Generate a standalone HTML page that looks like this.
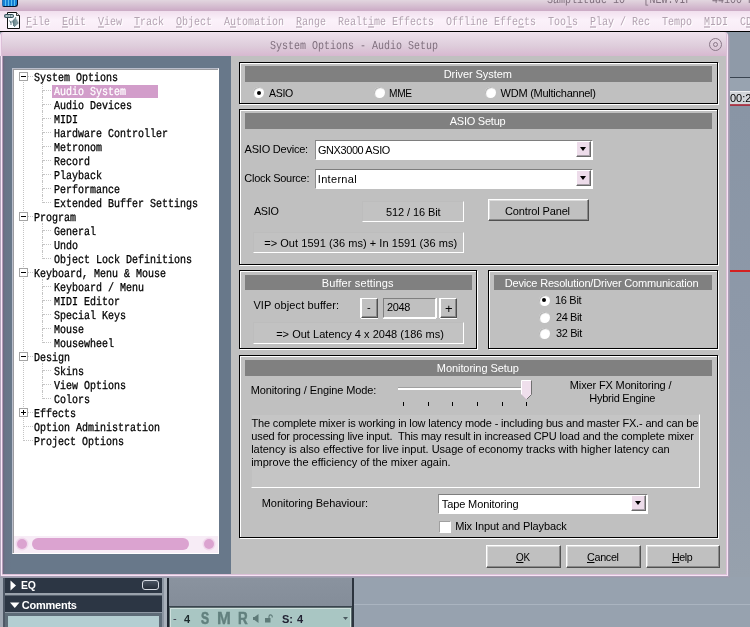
<!DOCTYPE html>
<html><head><meta charset="utf-8"><title>System Options - Audio Setup</title>
<style>
html,body{margin:0;padding:0;}
body{width:750px;height:627px;position:relative;overflow:hidden;background:#929daa;font-family:"Liberation Sans",sans-serif;font-size:11px;color:#000;}
div,span{position:absolute;box-sizing:border-box;white-space:pre;}
.t{font-family:"Liberation Sans",sans-serif;font-size:11px;line-height:13px;color:#000;}
.m{font-family:"Liberation Mono",monospace;font-size:10px;line-height:14px;color:#000;transform:scaleY(1.2);text-rendering:geometricPrecision;transform-origin:0 50%;-webkit-text-stroke:0.25px;}
.menu{color:#b3a3b1;text-shadow:1px 1px 0 #fff;-webkit-text-stroke:0;}
.menu u{text-underline-offset:1px;}
.hd{background:#808080;}
.grp{border:1px solid #000;box-shadow:inset 1px 1px 0 #fff,1px 1px 0 #fff;}
.btn{background:#c0c0c0;border:1px solid;border-color:#fff #505050 #505050 #fff;box-shadow:inset -1px -1px 0 #8a8a8a,inset 1px 1px 0 #dcdcdc;}
.flat{border:1px solid;border-color:#bdbdbd #fff #fff #bdbdbd;background:#c2c2c2;}
.combo{background:#fff;border:1px solid;border-color:#7e7e7e #fff #fff #8c8c8c;}
.cbtn{background:#eddcea;border:1px solid;border-color:#fff #6a6a6a #6a6a6a #fff;box-shadow:inset -1px -1px 0 #a8a0a8;}
.arrow{width:0;height:0;border-left:3.5px solid transparent;border-right:3.5px solid transparent;border-top:4px solid #000;}
.radio{width:11px;height:11px;border-radius:50%;background:#fff;box-shadow:inset 1px 1px 1px #b0b0b0;}
.dot{width:4px;height:4px;border-radius:50%;background:#000;left:3.5px;top:3.5px;}
u{text-decoration:underline;}
</style></head><body><div id="root" style="left:0;top:0;width:750px;height:627px;will-change:transform;">

<div style="left:0px;top:0px;width:750px;height:11px;background:linear-gradient(#e2d6df,#cbaac5);"></div>
<div style="left:2px;top:0px;width:16px;height:7px;background:repeating-linear-gradient(90deg,#1580d4 0,#1580d4 2px,#5cc0f0 2px,#5cc0f0 3px);border:1px solid;border-color:#1580d4 #0a1428 #0a1428 #2a70b0;border-top:none;border-radius:0 0 3px 2px;"></div>
<span class="m" style="left:547px;top:-5px;color:#7e6e7c;-webkit-text-stroke:0;">Samplitude 10</span>
<span class="m" style="left:643.5px;top:-5px;color:#7e6e7c;-webkit-text-stroke:0;">[NEW.VIP</span>
<span class="m" style="left:712px;top:-5px;color:#7e6e7c;-webkit-text-stroke:0;">44100 H</span>
<div style="left:0px;top:11px;width:750px;height:20px;background:linear-gradient(#f1dfee,#fbf1fa 45%,#f8ecf6);"></div>
<svg style="position:absolute;left:0px;top:11px" width="24" height="20" viewBox="0 11 24 20"><path d="M7.5 12.5h9l3 3v13h-12z" fill="#fbfcff" stroke="#111" stroke-width="1"/><path d="M16.5 12.5v3h3" fill="#dfe3e8" stroke="#111" stroke-width="0.8"/><rect x="4.5" y="14.5" width="9" height="3" rx="1" fill="#7b959b" stroke="#33505a" stroke-width="1"/><path d="M6 16h1.5M8.5 16h1.5M11 16h1.5" stroke="#f4f8fa" stroke-width="1"/><path d="M9.5 20.5l1.5 2.5M11 21v4M12.3 20.5l1 3M13.5 19.5v6.5M14.6 18.5v8.5M15.7 17v9M16.8 19.5v5.5M17.8 21.5v2.5" stroke="#3f636b" stroke-width="0.8" fill="none"/></svg>
<span class="m menu" style="left:26px;top:17px;"><u>F</u>ile</span>
<span class="m menu" style="left:62px;top:17px;"><u>E</u>dit</span>
<span class="m menu" style="left:98px;top:17px;"><u>V</u>iew</span>
<span class="m menu" style="left:134px;top:17px;"><u>T</u>rack</span>
<span class="m menu" style="left:176px;top:17px;"><u>O</u>bject</span>
<span class="m menu" style="left:224px;top:17px;">A<u>u</u>tomation</span>
<span class="m menu" style="left:296px;top:17px;"><u>R</u>ange</span>
<span class="m menu" style="left:338px;top:17px;">Realt<u>i</u>me Effects</span>
<span class="m menu" style="left:446px;top:17px;">Offline Effe<u>c</u>ts</span>
<span class="m menu" style="left:548px;top:17px;">Too<u>l</u>s</span>
<span class="m menu" style="left:590px;top:17px;"><u>P</u>lay / Rec</span>
<span class="m menu" style="left:662px;top:17px;">Tempo</span>
<span class="m menu" style="left:704px;top:17px;"><u>M</u>IDI</span>
<span class="m menu" style="left:740px;top:17px;">C<u>D</u></span>
<div style="left:0px;top:31px;width:750px;height:1px;background:#000;"></div>
<div style="left:728px;top:32px;width:22px;height:45px;background:#8f9aa8;"></div>
<div style="left:728px;top:77px;width:22px;height:1px;background:#3a4450;"></div>
<div style="left:728px;top:78px;width:22px;height:13px;background:#98a3b0;"></div>
<div style="left:728px;top:91px;width:22px;height:13px;background:#d2d6da;border-top:1px solid #eef0f2;"></div>
<span class="t" style="left:730px;top:92px;font-size:11px;">00:2</span>
<div style="left:728px;top:104px;width:22px;height:2px;background:linear-gradient(#b85060,#9c2c3c);"></div>
<div style="left:728px;top:106px;width:22px;height:471px;background:linear-gradient(#8995a5,#8e99a9 50%,#97a1ad);"></div>
<div style="left:728px;top:270px;width:22px;height:2px;background:#d42020;"></div>
<div style="left:0px;top:577px;width:750px;height:50px;background:#8a929e;"></div>
<div style="left:0px;top:577px;width:3px;height:50px;background:#a0a8b4;"></div>
<div style="left:3px;top:577px;width:2px;height:50px;background:#4e5866;"></div>
<div style="left:5px;top:577px;width:157px;height:50px;background:#5e6c78;"></div>
<div style="left:5px;top:577px;width:157px;height:16px;background:#2c3644;"></div>
<div style="left:5px;top:593px;width:157px;height:2px;background:#9aa2ac;"></div>
<div style="left:5px;top:595px;width:157px;height:1px;background:#5a6470;"></div>
<div style="left:5px;top:596px;width:157px;height:16px;background:#2c3644;"></div>
<div style="left:5px;top:612px;width:157px;height:1px;background:#8e98a4;"></div>
<div style="left:8px;top:616px;width:151px;height:11px;background:#b4ced2;"></div>
<div style="left:162px;top:577px;width:2px;height:50px;background:#8c96a2;"></div>
<div style="left:164px;top:577px;width:3px;height:50px;background:#a8b0ba;"></div>
<div style="left:167px;top:577px;width:2px;height:50px;background:#1e2630;"></div>
<svg style="position:absolute;left:10px;top:580px" width="7" height="11"><path d="M0.5 0.5L6 5.5L0.5 10.5z" fill="#fff"/></svg>
<span class="t" style="left:21.29px;top:579px;letter-spacing:-0.174px;transform:scaleX(0.9463);transform-origin:0 0;color:#fff;font-weight:bold;">EQ</span>
<svg style="position:absolute;left:10px;top:602px" width="10" height="7"><path d="M0 0.5L9.5 0.5L4.75 6z" fill="#fff"/></svg>
<span class="t" style="left:21.83px;top:599px;letter-spacing:-0.245px;color:#fff;font-weight:bold;">Comments</span>
<div style="left:142px;top:580px;width:17px;height:10px;border:1px solid #d8dce4;border-radius:3px;background:linear-gradient(#4a5462,#252d39);"></div>
<div style="left:169px;top:577px;width:185px;height:29px;background:linear-gradient(#8a939f,#848d99);"></div>
<div style="left:169px;top:606px;width:185px;height:2px;background:#3a444e;"></div>
<div style="left:169px;top:607px;width:183px;height:20px;background:#a9c6c3;border:1px solid #5c6c6e;border-bottom:none;box-shadow:inset 1px 1px 0 #cfe0dd,inset -1px 0 0 #cfe0dd;"></div>
<div style="left:352px;top:577px;width:2px;height:50px;background:#2c343e;"></div>
<div style="left:354px;top:577px;width:396px;height:50px;background:#97a2af;"></div>
<div style="left:354px;top:604px;width:396px;height:1px;background:#aab4c0;"></div>
<span class="t" style="left:173px;top:612px;color:#334;">-</span>
<span class="t" style="left:184px;top:613px;font-weight:bold;font-size:11px;line-height:13px;color:#1c2a2c;">4</span>
<span class="t" style="left:201px;top:609.5px;font-weight:bold;font-size:16px;line-height:18px;color:#62807e;-webkit-text-stroke:0.6px #62807e;transform:scaleX(0.76);transform-origin:0 0;">S</span>
<span class="t" style="left:216.7px;top:609.5px;font-weight:bold;font-size:16px;line-height:18px;color:#62807e;-webkit-text-stroke:0.3px #62807e;transform:scaleX(1.04);transform-origin:0 0;">M</span>
<span class="t" style="left:237.5px;top:609.5px;font-weight:bold;font-size:16px;line-height:18px;color:#62807e;-webkit-text-stroke:0.5px #62807e;transform:scaleX(0.84);transform-origin:0 0;">R</span>
<svg style="position:absolute;left:253px;top:614px" width="6" height="9"><path d="M0 3h1.5l4-3v9l-4-3h-1.5z" fill="#5e7a78"/></svg>
<svg style="position:absolute;left:265px;top:614px" width="8" height="9"><rect x="0" y="4" width="5.5" height="4.5" fill="#5e7a78"/><path d="M4 4V2.5a1.6 1.6 0 0 1 3.2 0V3.5" fill="none" stroke="#5e7a78" stroke-width="1.1"/></svg>
<span class="t" style="left:282px;top:613px;font-weight:bold;font-size:11px;color:#223;">S:</span>
<span class="t" style="left:297px;top:613px;font-weight:bold;font-size:11px;color:#223;">4</span>
<svg style="position:absolute;left:343px;top:617px" width="5" height="3"><path d="M0 0h5L2.5 3z" fill="#4a5a60"/></svg>
<div style="left:0px;top:33px;width:730px;height:545px;background:#9b9dac;border-radius:4px 5px 0 0;"></div>
<div style="left:0px;top:32px;width:729px;height:545px;background:#aa9eb6;border-radius:4px 5px 0 0;"></div>
<div style="left:0px;top:32px;width:728px;height:544px;background:#f6e4f4;border-radius:4px 4px 0 0;"></div>
<div style="left:1px;top:32px;width:726px;height:543px;background:#dcc0d8;border-radius:3px 3px 0 0;"></div>
<div style="left:2px;top:56px;width:1px;height:518px;background:#b49cba;"></div>
<div style="left:0px;top:56px;width:1px;height:520px;background:#b4a6bc;"></div>
<div style="left:1px;top:56px;width:1px;height:519px;background:#fbeaf9;"></div>
<div style="left:2px;top:32px;width:724px;height:24px;background:linear-gradient(#efe2ed,#e5d6e3 30%,#decddb 58%,#d7b8d0);border-radius:3px 3px 0 0;"></div>
<span class="m" style="left:270px;top:41px;color:#7f6f7d;-webkit-text-stroke:0;">System Options - Audio Setup</span>
<svg style="position:absolute;left:708px;top:37px" width="15" height="15"><circle cx="7.5" cy="7.5" r="6" fill="none" stroke="#8a7888" stroke-width="1"/><circle cx="7.5" cy="7.5" r="2" fill="none" stroke="#8a7888" stroke-width="1"/></svg>
<div style="left:3px;top:56px;width:228px;height:518px;background:linear-gradient(90deg,#70697f,#687588 2px,#68788a 8px);"></div>
<div style="left:231px;top:56px;width:495px;height:518px;background:#c0c0c0;"></div>
<div style="left:12px;top:68px;width:207px;height:486px;background:#fff;border:1px solid;border-color:#babecb #fff #fff #babecb;box-shadow:inset 1px 1px 0 #9c9ca0;"></div>
<div style="left:23px;top:82px;width:1px;height:359px;border-left:1px dotted #c4c4c4;"></div>
<div style="left:28px;top:76px;width:5px;height:1px;border-top:1px dotted #c4c4c4;"></div>
<div style="left:19px;top:72px;width:9px;height:9px;background:#fff;border:1px solid #a4a4a4;"></div>
<div style="left:21px;top:76px;width:5px;height:1px;background:#000;"></div>
<span class="m" style="left:34px;top:73px;">System Options</span>
<div style="left:42px;top:83px;width:1px;height:8px;border-left:1px dotted #c4c4c4;"></div>
<div style="left:42px;top:91px;width:1px;height:6px;border-left:1px dotted #c4c4c4;"></div>
<div style="left:43px;top:90px;width:8px;height:1px;border-top:1px dotted #c4c4c4;"></div>
<div style="left:52px;top:85px;width:106px;height:13px;background:#d29dca;"></div>
<span class="m" style="left:54px;top:87px;color:#fff;-webkit-text-stroke:0.2px #fff;">Audio System</span>
<div style="left:42px;top:97px;width:1px;height:8px;border-left:1px dotted #c4c4c4;"></div>
<div style="left:42px;top:105px;width:1px;height:6px;border-left:1px dotted #c4c4c4;"></div>
<div style="left:43px;top:104px;width:8px;height:1px;border-top:1px dotted #c4c4c4;"></div>
<span class="m" style="left:54px;top:101px;">Audio Devices</span>
<div style="left:42px;top:111px;width:1px;height:8px;border-left:1px dotted #c4c4c4;"></div>
<div style="left:42px;top:119px;width:1px;height:6px;border-left:1px dotted #c4c4c4;"></div>
<div style="left:43px;top:118px;width:8px;height:1px;border-top:1px dotted #c4c4c4;"></div>
<span class="m" style="left:54px;top:115px;">MIDI</span>
<div style="left:42px;top:125px;width:1px;height:8px;border-left:1px dotted #c4c4c4;"></div>
<div style="left:42px;top:133px;width:1px;height:6px;border-left:1px dotted #c4c4c4;"></div>
<div style="left:43px;top:132px;width:8px;height:1px;border-top:1px dotted #c4c4c4;"></div>
<span class="m" style="left:54px;top:129px;">Hardware Controller</span>
<div style="left:42px;top:139px;width:1px;height:8px;border-left:1px dotted #c4c4c4;"></div>
<div style="left:42px;top:147px;width:1px;height:6px;border-left:1px dotted #c4c4c4;"></div>
<div style="left:43px;top:146px;width:8px;height:1px;border-top:1px dotted #c4c4c4;"></div>
<span class="m" style="left:54px;top:143px;">Metronom</span>
<div style="left:42px;top:153px;width:1px;height:8px;border-left:1px dotted #c4c4c4;"></div>
<div style="left:42px;top:161px;width:1px;height:6px;border-left:1px dotted #c4c4c4;"></div>
<div style="left:43px;top:160px;width:8px;height:1px;border-top:1px dotted #c4c4c4;"></div>
<span class="m" style="left:54px;top:157px;">Record</span>
<div style="left:42px;top:167px;width:1px;height:8px;border-left:1px dotted #c4c4c4;"></div>
<div style="left:42px;top:175px;width:1px;height:6px;border-left:1px dotted #c4c4c4;"></div>
<div style="left:43px;top:174px;width:8px;height:1px;border-top:1px dotted #c4c4c4;"></div>
<span class="m" style="left:54px;top:171px;">Playback</span>
<div style="left:42px;top:181px;width:1px;height:8px;border-left:1px dotted #c4c4c4;"></div>
<div style="left:42px;top:189px;width:1px;height:6px;border-left:1px dotted #c4c4c4;"></div>
<div style="left:43px;top:188px;width:8px;height:1px;border-top:1px dotted #c4c4c4;"></div>
<span class="m" style="left:54px;top:185px;">Performance</span>
<div style="left:42px;top:195px;width:1px;height:8px;border-left:1px dotted #c4c4c4;"></div>
<div style="left:43px;top:202px;width:8px;height:1px;border-top:1px dotted #c4c4c4;"></div>
<span class="m" style="left:54px;top:199px;">Extended Buffer Settings</span>
<div style="left:28px;top:216px;width:5px;height:1px;border-top:1px dotted #c4c4c4;"></div>
<div style="left:19px;top:212px;width:9px;height:9px;background:#fff;border:1px solid #a4a4a4;"></div>
<div style="left:21px;top:216px;width:5px;height:1px;background:#000;"></div>
<span class="m" style="left:34px;top:213px;">Program</span>
<div style="left:42px;top:223px;width:1px;height:8px;border-left:1px dotted #c4c4c4;"></div>
<div style="left:42px;top:231px;width:1px;height:6px;border-left:1px dotted #c4c4c4;"></div>
<div style="left:43px;top:230px;width:8px;height:1px;border-top:1px dotted #c4c4c4;"></div>
<span class="m" style="left:54px;top:227px;">General</span>
<div style="left:42px;top:237px;width:1px;height:8px;border-left:1px dotted #c4c4c4;"></div>
<div style="left:42px;top:245px;width:1px;height:6px;border-left:1px dotted #c4c4c4;"></div>
<div style="left:43px;top:244px;width:8px;height:1px;border-top:1px dotted #c4c4c4;"></div>
<span class="m" style="left:54px;top:241px;">Undo</span>
<div style="left:42px;top:251px;width:1px;height:8px;border-left:1px dotted #c4c4c4;"></div>
<div style="left:43px;top:258px;width:8px;height:1px;border-top:1px dotted #c4c4c4;"></div>
<span class="m" style="left:54px;top:255px;">Object Lock Definitions</span>
<div style="left:28px;top:272px;width:5px;height:1px;border-top:1px dotted #c4c4c4;"></div>
<div style="left:19px;top:268px;width:9px;height:9px;background:#fff;border:1px solid #a4a4a4;"></div>
<div style="left:21px;top:272px;width:5px;height:1px;background:#000;"></div>
<span class="m" style="left:34px;top:269px;">Keyboard, Menu &amp; Mouse</span>
<div style="left:42px;top:279px;width:1px;height:8px;border-left:1px dotted #c4c4c4;"></div>
<div style="left:42px;top:287px;width:1px;height:6px;border-left:1px dotted #c4c4c4;"></div>
<div style="left:43px;top:286px;width:8px;height:1px;border-top:1px dotted #c4c4c4;"></div>
<span class="m" style="left:54px;top:283px;">Keyboard / Menu</span>
<div style="left:42px;top:293px;width:1px;height:8px;border-left:1px dotted #c4c4c4;"></div>
<div style="left:42px;top:301px;width:1px;height:6px;border-left:1px dotted #c4c4c4;"></div>
<div style="left:43px;top:300px;width:8px;height:1px;border-top:1px dotted #c4c4c4;"></div>
<span class="m" style="left:54px;top:297px;">MIDI Editor</span>
<div style="left:42px;top:307px;width:1px;height:8px;border-left:1px dotted #c4c4c4;"></div>
<div style="left:42px;top:315px;width:1px;height:6px;border-left:1px dotted #c4c4c4;"></div>
<div style="left:43px;top:314px;width:8px;height:1px;border-top:1px dotted #c4c4c4;"></div>
<span class="m" style="left:54px;top:311px;">Special Keys</span>
<div style="left:42px;top:321px;width:1px;height:8px;border-left:1px dotted #c4c4c4;"></div>
<div style="left:42px;top:329px;width:1px;height:6px;border-left:1px dotted #c4c4c4;"></div>
<div style="left:43px;top:328px;width:8px;height:1px;border-top:1px dotted #c4c4c4;"></div>
<span class="m" style="left:54px;top:325px;">Mouse</span>
<div style="left:42px;top:335px;width:1px;height:8px;border-left:1px dotted #c4c4c4;"></div>
<div style="left:43px;top:342px;width:8px;height:1px;border-top:1px dotted #c4c4c4;"></div>
<span class="m" style="left:54px;top:339px;">Mousewheel</span>
<div style="left:28px;top:356px;width:5px;height:1px;border-top:1px dotted #c4c4c4;"></div>
<div style="left:19px;top:352px;width:9px;height:9px;background:#fff;border:1px solid #a4a4a4;"></div>
<div style="left:21px;top:356px;width:5px;height:1px;background:#000;"></div>
<span class="m" style="left:34px;top:353px;">Design</span>
<div style="left:42px;top:363px;width:1px;height:8px;border-left:1px dotted #c4c4c4;"></div>
<div style="left:42px;top:371px;width:1px;height:6px;border-left:1px dotted #c4c4c4;"></div>
<div style="left:43px;top:370px;width:8px;height:1px;border-top:1px dotted #c4c4c4;"></div>
<span class="m" style="left:54px;top:367px;">Skins</span>
<div style="left:42px;top:377px;width:1px;height:8px;border-left:1px dotted #c4c4c4;"></div>
<div style="left:42px;top:385px;width:1px;height:6px;border-left:1px dotted #c4c4c4;"></div>
<div style="left:43px;top:384px;width:8px;height:1px;border-top:1px dotted #c4c4c4;"></div>
<span class="m" style="left:54px;top:381px;">View Options</span>
<div style="left:42px;top:391px;width:1px;height:8px;border-left:1px dotted #c4c4c4;"></div>
<div style="left:43px;top:398px;width:8px;height:1px;border-top:1px dotted #c4c4c4;"></div>
<span class="m" style="left:54px;top:395px;">Colors</span>
<div style="left:28px;top:412px;width:5px;height:1px;border-top:1px dotted #c4c4c4;"></div>
<div style="left:19px;top:408px;width:9px;height:9px;background:#fff;border:1px solid #a4a4a4;"></div>
<div style="left:21px;top:412px;width:5px;height:1px;background:#000;"></div>
<div style="left:23px;top:410px;width:1px;height:5px;background:#000;"></div>
<span class="m" style="left:34px;top:409px;">Effects</span>
<div style="left:24px;top:426px;width:9px;height:1px;border-top:1px dotted #c4c4c4;"></div>
<span class="m" style="left:34px;top:423px;">Option Administration</span>
<div style="left:24px;top:440px;width:9px;height:1px;border-top:1px dotted #c4c4c4;"></div>
<span class="m" style="left:34px;top:437px;">Project Options</span>
<div style="left:14px;top:536px;width:204px;height:17px;background:#f7ecf6;"></div>
<div style="left:32px;top:538px;width:157px;height:12px;background:#dba3d0;border-radius:6px;"></div>
<div style="left:17px;top:539px;width:10px;height:10px;background:#dba3d0;border-radius:50%;box-shadow:0 0 0 1.5px #f0d8ec;"></div>
<div style="left:204px;top:539px;width:10px;height:10px;background:#dba3d0;border-radius:50%;box-shadow:0 0 0 1.5px #f0d8ec;"></div>
<div class="grp" style="left:239px;top:62px;width:479px;height:42px;"></div>
<div class="hd" style="left:245px;top:66px;width:467px;height:16px;"></div>
<span class="t" style="left:443.70px;top:68px;letter-spacing:-0.076px;color:#fff;">Driver System</span>
<div class="radio" style="left:253.0px;top:87.0px;width:11px;height:11px;"><div class="dot"></div></div>
<span class="t" style="left:269.42px;top:87px;letter-spacing:-0.312px;transform:scaleX(0.9593);transform-origin:0 0;">ASIO</span>
<div class="radio" style="left:373.8px;top:87.0px;width:11px;height:11px;"></div>
<span class="t" style="left:388.74px;top:87px;letter-spacing:-0.311px;transform:scaleX(0.9240);transform-origin:0 0;">MME</span>
<div class="radio" style="left:484.9px;top:87.0px;width:11px;height:11px;"></div>
<span class="t" style="left:500.61px;top:87px;letter-spacing:-0.251px;">WDM (Multichannel)</span>
<div class="grp" style="left:239px;top:109px;width:479px;height:156px;"></div>
<div class="hd" style="left:245px;top:113px;width:467px;height:16px;"></div>
<span class="t" style="left:449.73px;top:115px;letter-spacing:-0.242px;color:#fff;">ASIO Setup</span>
<span class="t" style="left:244.58px;top:143px;letter-spacing:-0.227px;">ASIO Device:</span>
<div class="combo" style="left:315px;top:140px;width:278px;height:20px;"></div>
<span class="t" style="left:318.18px;top:144px;letter-spacing:-0.380px;transform:scaleX(0.9918);transform-origin:0 0;">GNX3000 ASIO</span>
<div class="cbtn" style="left:576px;top:141px;width:15px;height:16px;"><div class="arrow" style="left:2.5px;top:5px"></div></div>
<span class="t" style="left:244.31px;top:172px;letter-spacing:-0.274px;">Clock Source:</span>
<div class="combo" style="left:315px;top:169px;width:278px;height:20px;"></div>
<span class="t" style="left:317.82px;top:173px;letter-spacing:0.305px;">Internal</span>
<div class="cbtn" style="left:576px;top:170px;width:15px;height:16px;"><div class="arrow" style="left:2.5px;top:5px"></div></div>
<span class="t" style="left:253.87px;top:205px;letter-spacing:-0.343px;transform:scaleX(0.9824);transform-origin:0 0;">ASIO</span>
<div class="flat" style="left:362px;top:201px;width:102px;height:21px;"></div>
<span class="t" style="left:385.96px;top:206px;letter-spacing:-0.091px;">512 / 16 Bit</span>
<div class="btn" style="left:488px;top:199px;width:101px;height:22px;"></div>
<span class="t" style="left:505.00px;top:205px;letter-spacing:-0.133px;">Control Panel</span>
<div class="flat" style="left:253px;top:232px;width:211px;height:21px;"></div>
<span class="t" style="left:264.16px;top:237px;letter-spacing:0.053px;">=&gt; Out 1591 (36 ms) + In 1591 (36 ms)</span>
<div class="grp" style="left:239px;top:270px;width:238px;height:79px;"></div>
<div class="hd" style="left:245px;top:275px;width:227px;height:15px;"></div>
<span class="t" style="left:321.78px;top:277px;letter-spacing:0.118px;color:#fff;">Buffer settings</span>
<span class="t" style="left:253.39px;top:299px;letter-spacing:0.098px;">VIP object buffer:</span>
<div class="btn" style="left:361px;top:298px;width:17px;height:20px;box-shadow:inset -1px -1px 0 #8a8a8a,0 1px 0 #fff,-1px 0 0 #fff;"></div>
<span class="t" style="left:367px;top:301px;">-</span>
<div style="left:383px;top:298px;width:53px;height:20px;border:1px solid;border-color:#808080 #fff #fff #808080;box-shadow:0 1px 0 #fff,1px 0 0 #fff;"></div>
<span class="t" style="left:387.13px;top:301px;letter-spacing:-0.356px;transform:scaleX(0.9952);transform-origin:0 0;">2048</span>
<div class="btn" style="left:440px;top:298px;width:17px;height:20px;box-shadow:inset -1px -1px 0 #8a8a8a,0 1px 0 #fff,-1px 0 0 #fff;"></div>
<span class="t" style="left:445px;top:301.5px;font-size:13px;">+</span>
<div class="flat" style="left:253px;top:322px;width:211px;height:22px;"></div>
<span class="t" style="left:276.16px;top:328px;letter-spacing:0.027px;">=&gt; Out Latency 4 x 2048 (186 ms)</span>
<div class="grp" style="left:488px;top:270px;width:230px;height:79px;"></div>
<div class="hd" style="left:494px;top:275px;width:218px;height:15px;"></div>
<span class="t" style="left:504.75px;top:277px;letter-spacing:-0.182px;color:#fff;">Device Resolution/Driver Communication</span>
<div class="radio" style="left:538.8px;top:294.7px;width:11px;height:11px;"><div class="dot"></div></div>
<span class="t" style="left:554.91px;top:294px;letter-spacing:-0.283px;">16 Bit</span>
<div class="radio" style="left:538.8px;top:311.7px;width:11px;height:11px;"></div>
<span class="t" style="left:555.67px;top:311px;letter-spacing:-0.359px;transform:scaleX(0.9920);transform-origin:0 0;">24 Bit</span>
<div class="radio" style="left:538.8px;top:327.7px;width:11px;height:11px;"></div>
<span class="t" style="left:555.71px;top:327px;letter-spacing:-0.343px;transform:scaleX(0.9934);transform-origin:0 0;">32 Bit</span>
<div class="grp" style="left:239px;top:355px;width:479px;height:183px;"></div>
<div class="hd" style="left:245px;top:360px;width:467px;height:16px;"></div>
<span class="t" style="left:436.84px;top:362px;letter-spacing:-0.073px;color:#fff;">Monitoring Setup</span>
<span class="t" style="left:250.64px;top:384px;letter-spacing:-0.114px;">Monitoring / Engine Mode:</span>
<div style="left:398px;top:387px;width:126px;height:3px;background:#fff;border-top:1px solid #a0a0a0;"></div>
<div style="left:403px;top:402px;width:1px;height:4px;background:#000;"></div>
<div style="left:428px;top:402px;width:1px;height:4px;background:#000;"></div>
<div style="left:452px;top:402px;width:1px;height:4px;background:#000;"></div>
<div style="left:477px;top:402px;width:1px;height:4px;background:#000;"></div>
<div style="left:502px;top:402px;width:1px;height:4px;background:#000;"></div>
<div style="left:526px;top:402px;width:1px;height:4px;background:#000;"></div>
<svg style="position:absolute;left:521px;top:380px" width="11" height="21"><path d="M0.5 0.5h10v14l-5 5l-5-5z" fill="#efdfec"/><path d="M0.5 14.5v-14h10" fill="none" stroke="#fff"/><path d="M10.5 0.5v14l-5 5" fill="none" stroke="#707070"/><path d="M0.5 14.5l5 5" fill="none" stroke="#d8c8d6"/></svg>
<span class="t" style="left:569.80px;top:379px;letter-spacing:-0.138px;">Mixer FX Monitoring /</span>
<span class="t" style="left:589.20px;top:392px;letter-spacing:-0.241px;">Hybrid Engine</span>
<div style="left:251px;top:414px;width:449px;height:74px;border:1px solid;border-color:#c0c0c0 #fff #fff #c0c0c0;background:#c5c5c5;"></div>
<span class="t" style="left:251.45px;top:417px;letter-spacing:-0.161px;">The complete mixer is working in low latency mode - including bus and master FX.- and can be</span>
<span class="t" style="left:251.31px;top:430px;letter-spacing:-0.144px;">used for processing live input.  This may result in increased CPU load and the complete mixer</span>
<span class="t" style="left:251.15px;top:443px;letter-spacing:-0.021px;">latency is also effective for live input. Usage of economy tracks with higher latency can</span>
<span class="t" style="left:251.18px;top:456px;letter-spacing:-0.008px;">improve the efficiency of the mixer again.</span>
<span class="t" style="left:261.70px;top:497px;letter-spacing:-0.029px;">Monitoring Behaviour:</span>
<div class="combo" style="left:438px;top:494px;width:210px;height:20px;"></div>
<span class="t" style="left:441.74px;top:498px;letter-spacing:-0.106px;">Tape Monitoring</span>
<div class="cbtn" style="left:631px;top:495px;width:15px;height:16px;"><div class="arrow" style="left:2.5px;top:5px"></div></div>
<div style="left:439px;top:520.5px;width:12px;height:12px;background:#fff;border:1px solid;border-color:#a0a0a0 #fff #fff #a0a0a0;"></div>
<span class="t" style="left:455.20px;top:520px;letter-spacing:-0.099px;">Mix Input and Playback</span>
<div class="btn" style="left:486px;top:545px;width:75px;height:23px;"></div>
<span class="t" style="left:515.59px;top:551px;letter-spacing:-0.274px;transform:scaleX(0.8989);transform-origin:0 0;"><u>O</u>K</span>
<div class="btn" style="left:566px;top:545px;width:75px;height:23px;"></div>
<span class="t" style="left:586.73px;top:551px;letter-spacing:-0.338px;transform:scaleX(0.9837);transform-origin:0 0;"><u>C</u>ancel</span>
<div class="btn" style="left:646px;top:545px;width:74px;height:23px;"></div>
<span class="t" style="left:672.12px;top:551px;letter-spacing:-0.400px;transform:scaleX(0.9661);transform-origin:0 0;"><u>H</u>elp</span>
</div></body></html>
